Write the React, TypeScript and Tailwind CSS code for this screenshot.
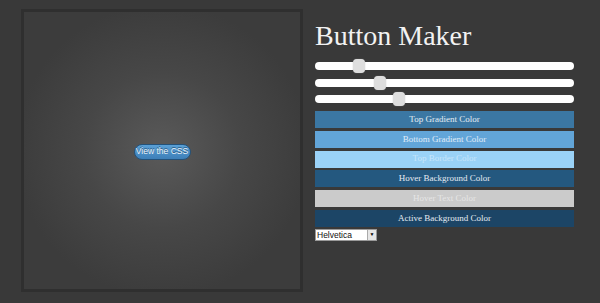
import React from 'react';

const bars = [
  { label: 'Top Gradient Color', bg: 'bg-[#3b77a3]', text: 'text-[#e4edf4]' },
  { label: 'Bottom Gradient Color', bg: 'bg-[#62a5d8]', text: 'text-[#e0edf8]' },
  { label: 'Top Border Color', bg: 'bg-[#9ad2f7]', text: 'text-[#c8e6fb]' },
  { label: 'Hover Background Color', bg: 'bg-[#24587f]', text: 'text-[#e4ebf2]' },
  { label: 'Hover Text Color', bg: 'bg-[#cbcbcb]', text: 'text-[#e6e6e6]' },
  { label: 'Active Background Color', bg: 'bg-[#1c4566]', text: 'text-[#e4ebf2]' },
];

const Slider: React.FC<{ pos: number }> = ({ pos }) => (
  <div className="relative h-[8px] w-[259px] rounded-full bg-white">
    <div
      className="absolute top-[-3px] h-[14px] w-[12px] rounded-[4px] bg-[#dedede] shadow-[0_0_1px_#999]"
      style={{ left: pos }}
    />
  </div>
);

const App: React.FC = () => {
  return (
    <div className="flex h-[303px] w-[600px] bg-[#393939] pl-[21px] pt-[9px] font-['Liberation_Sans',sans-serif]">
      {/* Preview panel */}
      <div className="flex h-[283px] w-[282px] items-center justify-center border-[3px] border-[#2f2f2f] bg-[radial-gradient(circle_at_center,#5a5a5a_0%,#474747_40%,#3c3c3c_75%)]">
        <button className="mt-[2px] flex h-[16px] w-[57px] items-center justify-center whitespace-nowrap rounded-full border border-[#24527a] bg-[linear-gradient(#5aa0d6,#3d7fb8)] p-0 text-[8.5px] leading-none text-[#eaf3fa] [text-shadow:0_-1px_0_#2a5a85]">
          View the CSS
        </button>
      </div>

      {/* Controls */}
      <div className="ml-[12px] flex flex-col pt-[13px]">
        <h1 className="font-['Liberation_Serif',serif] text-[28px] leading-none text-[#f2f2f2]">
          Button Maker
        </h1>
        <div className="mt-[12px] flex flex-col gap-[8.5px]">
          <Slider pos={38} />
          <Slider pos={59} />
          <Slider pos={78} />
        </div>
        <div className="mt-[8px] flex flex-col gap-[2.8px]">
          {bars.map((b) => (
            <div
              key={b.label}
              className={`flex h-[17px] w-[259px] items-center justify-center font-['Liberation_Serif',serif] text-[9px] font-normal ${b.bg} ${b.text}`}
            >
              {b.label}
            </div>
          ))}
        </div>
        <div className="mt-[2px] flex h-[12px] w-[62px] items-center justify-between border border-[#999] bg-white">
          <span className="pl-[1px] text-[8.5px] leading-none text-[#111]">Helvetica</span>
          <span className="flex h-full w-[9px] items-center justify-center border-l border-[#aaa] bg-[#e6e6e6] text-[5px] leading-none text-black">
            ▼
          </span>
        </div>
      </div>
    </div>
  );
};

export default App;
